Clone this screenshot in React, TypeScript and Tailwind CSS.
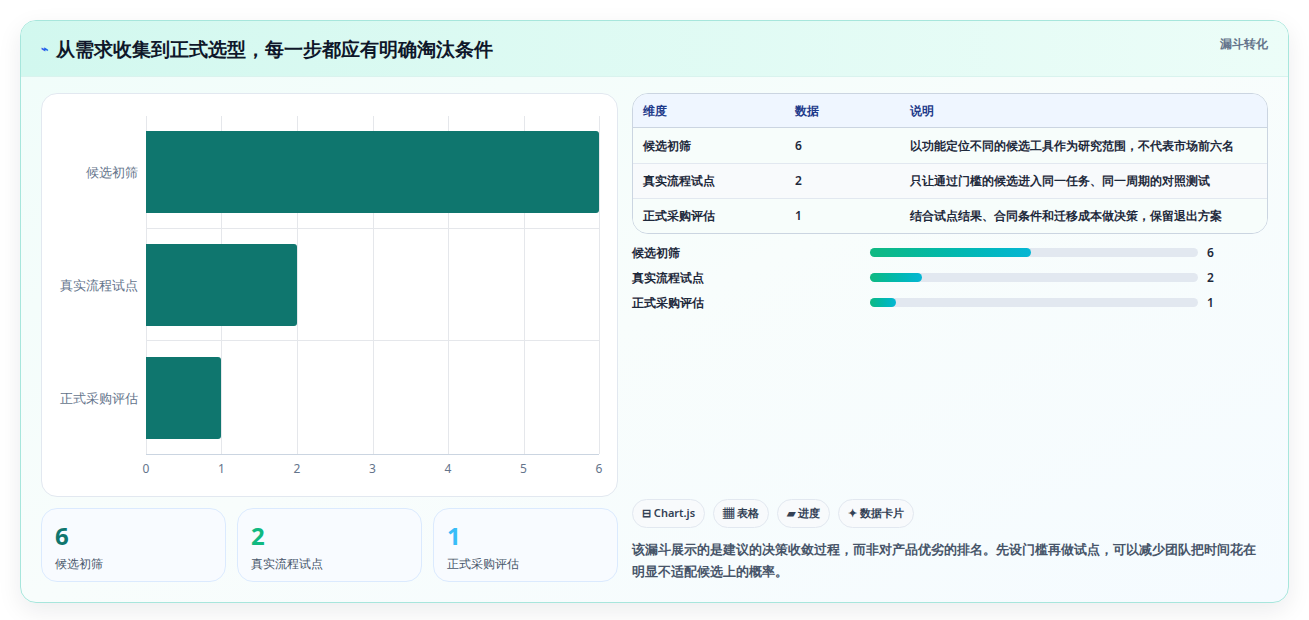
const rows = [
  { name: "候选初筛", value: 6, note: "以功能定位不同的候选工具作为研究范围，不代表市场前六名", pct: 49 },
  { name: "真实流程试点", value: 2, note: "只让通过门槛的候选进入同一任务、同一周期的对照测试", pct: 16 },
  { name: "正式采购评估", value: 1, note: "结合试点结果、合同条件和迁移成本做决策，保留退出方案", pct: 8 },
];

const ticks = [0, 1, 2, 3, 4, 5, 6];

function Chart() {
  return (
    <div className="h-[404px] rounded-2xl border border-[#e2e8f0] bg-white px-3 pt-[22px]">
      <div className="flex">
        <div className="flex w-[92px] flex-col">
          {rows.map((r) => (
            <div key={r.name} className="flex h-[113px] items-center justify-end pr-2 text-[13px] text-[#64748b]">
              {r.name}
            </div>
          ))}
        </div>
        <div className="relative h-[339px] w-[453px] border-b border-[#cbd5e1]">
          {ticks.map((t) => (
            <div
              key={t}
              className="absolute bottom-0 top-0 w-px bg-[#e5e7eb]"
              style={{ left: `${(t / 6) * 100}%` }}
            />
          ))}
          <div className="relative flex h-full flex-col">
            {rows.map((r) => (
              <div key={r.name} className="flex h-[113px] items-center border-b border-[#e5e7eb] last:border-b-0">
                <div className="h-[82px] rounded-r-[3px] bg-[#0f766e]" style={{ width: `${(r.value / 6) * 100}%` }} />
              </div>
            ))}
          </div>
          {ticks.map((t) => (
            <div
              key={t}
              className="absolute -bottom-[24px] -translate-x-1/2 text-[12px] text-[#64748b]"
              style={{ left: `${(t / 6) * 100}%` }}
            >
              {t}
            </div>
          ))}
        </div>
      </div>
    </div>
  );
}

export default function App() {
  const statColors = ["text-[#0f766e]", "text-[#10b981]", "text-[#38bdf8]"];
  return (
    <div className="min-h-[620px] bg-white p-5 font-['Noto_Sans_CJK_SC',sans-serif]">
      <div className="overflow-hidden rounded-2xl border border-[#a7e6dc] bg-gradient-to-br from-[#f0fdfa] via-[#f8fdfc] to-[#f5fbff] shadow-[0_8px_24px_rgba(15,23,42,0.08)]">
        <div className="flex h-[56px] items-start justify-between border-b border-[#d9f3ee] bg-gradient-to-r from-[#d2f8ef] to-[#ecfdf8] px-5">
          <h1 className="mt-[14px] flex items-center gap-2 text-[19px] font-bold text-[#0f172a]">
            <span className="text-[12px] text-[#2563eb]">⌁</span>
            从需求收集到正式选型，每一步都应有明确淘汰条件
          </h1>
          <span className="mt-[14px] text-[12px] font-semibold text-[#64748b]">漏斗转化</span>
        </div>
        <div className="flex gap-[14px] px-5 pb-5 pt-4">
          <div className="flex w-[577px] flex-col gap-[11px]">
            <Chart />
            <div className="grid grid-cols-3 gap-[11px]">
              {rows.map((r, i) => (
                <div key={r.name} className="h-[74px] rounded-2xl border border-[#dbeafe] bg-[#f8fbff] px-[13px] pt-[12px]">
                  <div className={`text-[24px] font-bold leading-[30px] ${statColors[i]}`}>{r.value}</div>
                  <div className="mt-[4px] text-[12px] text-[#475569]">{r.name}</div>
                </div>
              ))}
            </div>
          </div>
          <div className="flex flex-1 flex-col">
            <div className="overflow-hidden rounded-2xl border border-[#cbd5e1] text-[12px] font-semibold">
              <div className="flex h-[34px] items-center border-b border-[#cbd5e1] bg-[#eff6ff] px-[10px] text-[#1e3a8a]">
                <div className="w-[152px]">维度</div>
                <div className="w-[115px]">数据</div>
                <div>说明</div>
              </div>
              {rows.map((r, i) => (
                <div
                  key={r.name}
                  className={`flex h-[35px] items-center px-[10px] text-[#1e293b] ${i > 0 ? "border-t border-[#e2e8f0]" : ""} ${i === 1 ? "bg-[#f8fafc]" : "bg-[#f7fdfb]"}`}
                >
                  <div className="w-[152px]">{r.name}</div>
                  <div className="w-[115px]">{r.value}</div>
                  <div>{r.note}</div>
                </div>
              ))}
            </div>
            <div className="mt-[10px] flex flex-col gap-[8px]">
              {rows.map((r) => (
                <div key={r.name} className="flex h-[17px] items-center text-[12px] font-semibold text-[#1e293b]">
                  <div className="w-[238px]">{r.name}</div>
                  <div className="h-[9px] w-[328px] rounded-full bg-[#e2e8f0]">
                    <div className="h-full rounded-full bg-gradient-to-r from-[#10b981] to-[#06b6d4]" style={{ width: `${r.pct}%` }} />
                  </div>
                  <div className="ml-[9px]">{r.value}</div>
                </div>
              ))}
            </div>
            <div className="mt-auto">
              <div className="flex gap-[8px] text-[11px] font-semibold text-[#334155]">
                <span className="flex h-[29px] items-center rounded-full border border-[#e2e8f0] bg-[#f8fafc] px-[9px]">⊟ Chart.js</span>
                <span className="flex h-[29px] items-center rounded-full border border-[#e2e8f0] bg-[#f8fafc] px-[9px]">▦ 表格</span>
                <span className="flex h-[29px] items-center rounded-full border border-[#e2e8f0] bg-[#f8fafc] px-[9px]">▰ 进度</span>
                <span className="flex h-[29px] items-center rounded-full border border-[#e2e8f0] bg-[#f8fafc] px-[9px]">✦ 数据卡片</span>
              </div>
              <p className="mt-[10px] text-[13px] font-semibold leading-[22px] text-[#475569]">
                该漏斗展示的是建议的决策收敛过程，而非对产品优劣的排名。先设门槛再做试点，可以减少团队把时间花在明显不适配候选上的概率。
              </p>
            </div>
          </div>
        </div>
      </div>
    </div>
  );
}
